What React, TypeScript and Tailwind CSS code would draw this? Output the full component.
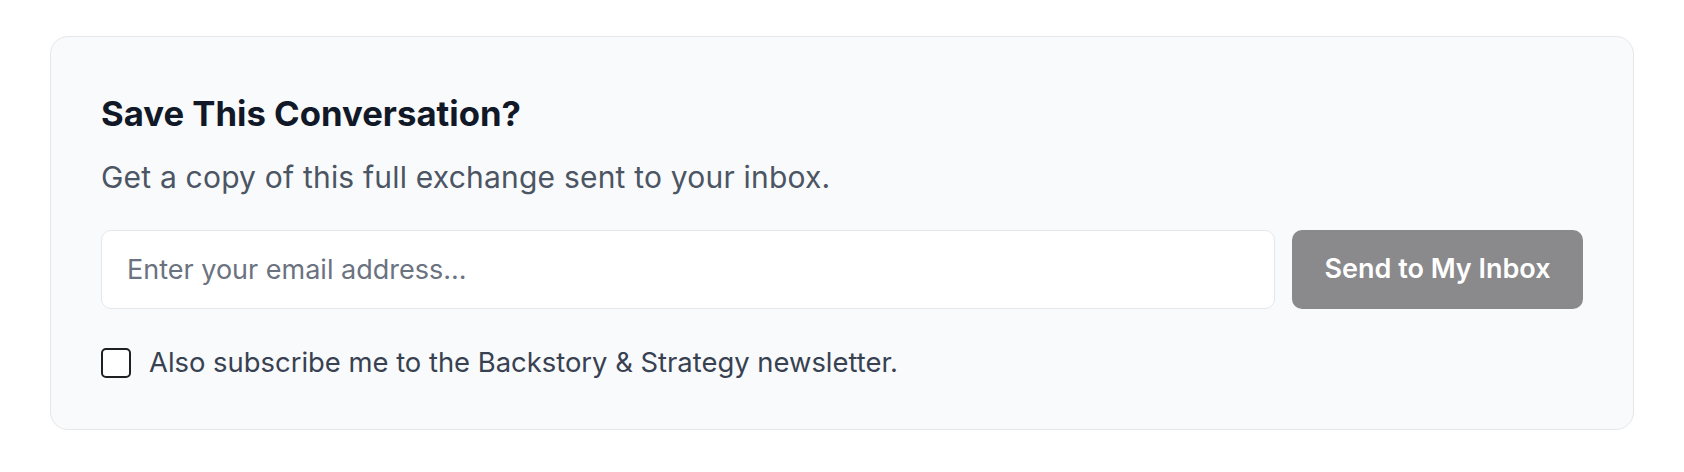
import React from "react";

export default function App() {
  return (
    <div
      className="min-h-[472px] w-full bg-white px-[50px] pt-[36px]"
      style={{ fontFamily: "Inter, 'Noto Sans', sans-serif" }}
    >
      <div className="rounded-[18px] border border-[#e5e7eb] bg-[#f9fafb] px-[50px] pb-[50px] pt-[56px]">
        <h2 className="text-[34.7px] font-bold leading-[40px] text-[#111827]">
          Save This Conversation?
        </h2>
        <p className="mt-[26px] text-[30px] leading-[36px] tracking-[0.2px] text-[#4b5563]">
          Get a copy of this full exchange sent to your inbox.
        </p>
        <div className="mt-[35px] flex gap-[17px]">
          <input
            type="email"
            placeholder="Enter your email address..."
            className="h-[79px] flex-1 rounded-[10px] border border-[#e5e7eb] bg-white px-[25px] text-[27px] text-[#111827] outline-none placeholder:text-[#6b7280]"
          />
          <button className="h-[79px] w-[291px] rounded-[10px] bg-[#8a8a8c] text-[27px] font-semibold text-white">
            Send to My Inbox
          </button>
        </div>
        <label className="mt-[37px] flex items-center gap-[18px]">
          <span className="block h-[30px] w-[30px] rounded-[5px] border-2 border-[#1f2022] bg-white" />
          <span className="text-[27.4px] leading-[33px] text-[#374151]">
            Also subscribe me to the Backstory &amp; Strategy newsletter.
          </span>
        </label>
      </div>
    </div>
  );
}
